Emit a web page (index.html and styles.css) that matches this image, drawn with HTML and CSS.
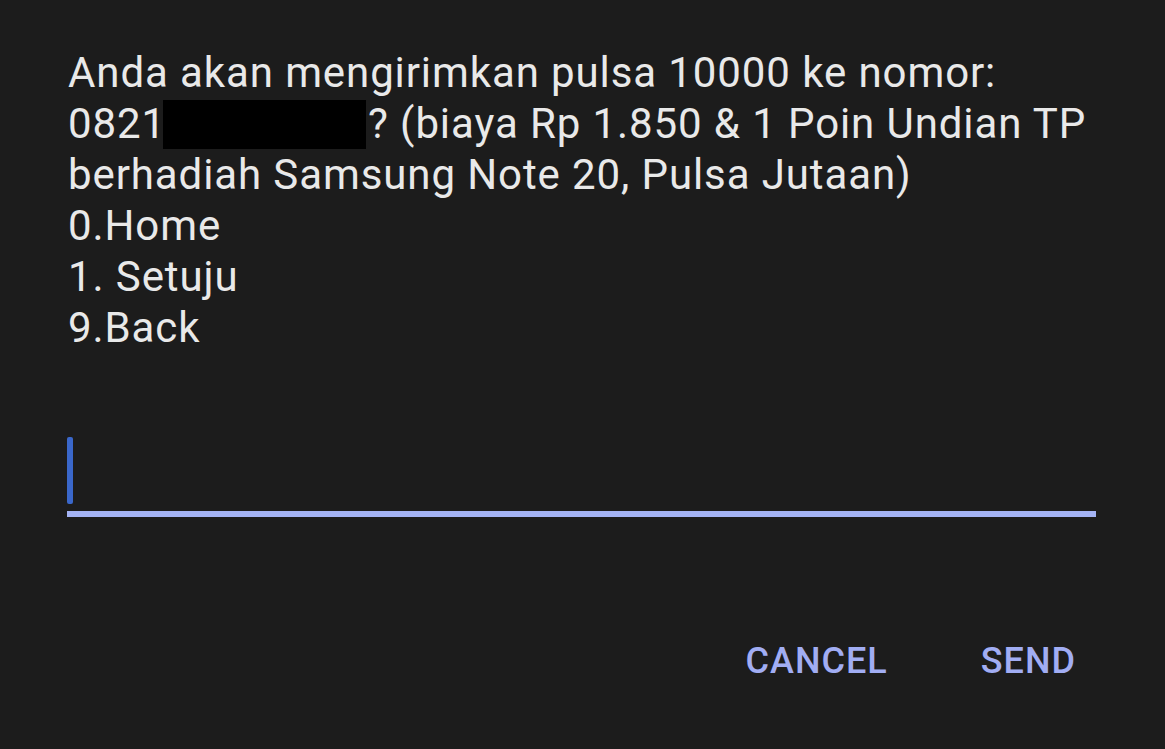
FILE: index.html
```html
<!DOCTYPE html>
<html lang="en">

<head>
    <meta charset="UTF-8">
    <meta name="viewport" content="width=device-width, initial-scale=1.0">
    <title>USSD</title>
    <link rel="stylesheet" href="styles.css">
</head>

<body>

    <div class="dialog">
        <section class="message">
            <p>Anda akan mengirimkan pulsa 10000 ke nomor:</p>
            <p>0821<span class="masked"></span>? (biaya Rp 1.850 &amp; 1 Poin Undian TP</p>
            <p>berhadiah Samsung Note 20, Pulsa Jutaan)</p>
            <p>0.Home</p>
            <p>1. Setuju</p>
            <p>9.Back</p>
        </section>

        <section class="reply">
            <span class="caret"></span>
        </section>

        <section class="actions">
            <button class="action">CANCEL</button>
            <button class="action">SEND</button>
        </section>
    </div>

</body>

</html>
```

FILE: styles.css
```css
html {
    box-sizing: border-box;
    height: 100%;
}

*,
*::before,
*::after {
    box-sizing: inherit;
    margin: 0;
    padding: 0;
}

body {
    background: #1c1c1c;
    color: #e9e9e9;
    font-family: Roboto, 'Noto Sans', sans-serif;
    height: inherit;
    overflow: hidden;
}

.dialog {
    padding: 47px 60px 0 68px;
}

.message {
    font-size: 42px;
    letter-spacing: 0.9px;
    line-height: 51px;
}

.message p {
    white-space: nowrap;
}

.masked {
    background: #000;
    display: inline-block;
    height: 49px;
    margin-left: -3px;
    margin-right: 2px;
    vertical-align: -11px;
    width: 203px;
}

.reply {
    border-bottom: 6px solid #a4b3f4;
    height: 84px;
    margin-top: 80px;
    margin-left: -1px;
    padding-top: 4px;
    width: 1029px;
}

.caret {
    background: #3a67ca;
    border-radius: 2px;
    display: block;
    height: 67px;
    width: 6px;
}

.actions {
    display: flex;
    gap: 93px;
    justify-content: flex-end;
    margin-top: 123px;
    padding-right: 29px;
}

.action {
    background: none;
    border: none;
    color: #a1adf3;
    font-family: inherit;
    font-size: 36px;
    font-weight: 500;
    letter-spacing: 1px;
}
```
